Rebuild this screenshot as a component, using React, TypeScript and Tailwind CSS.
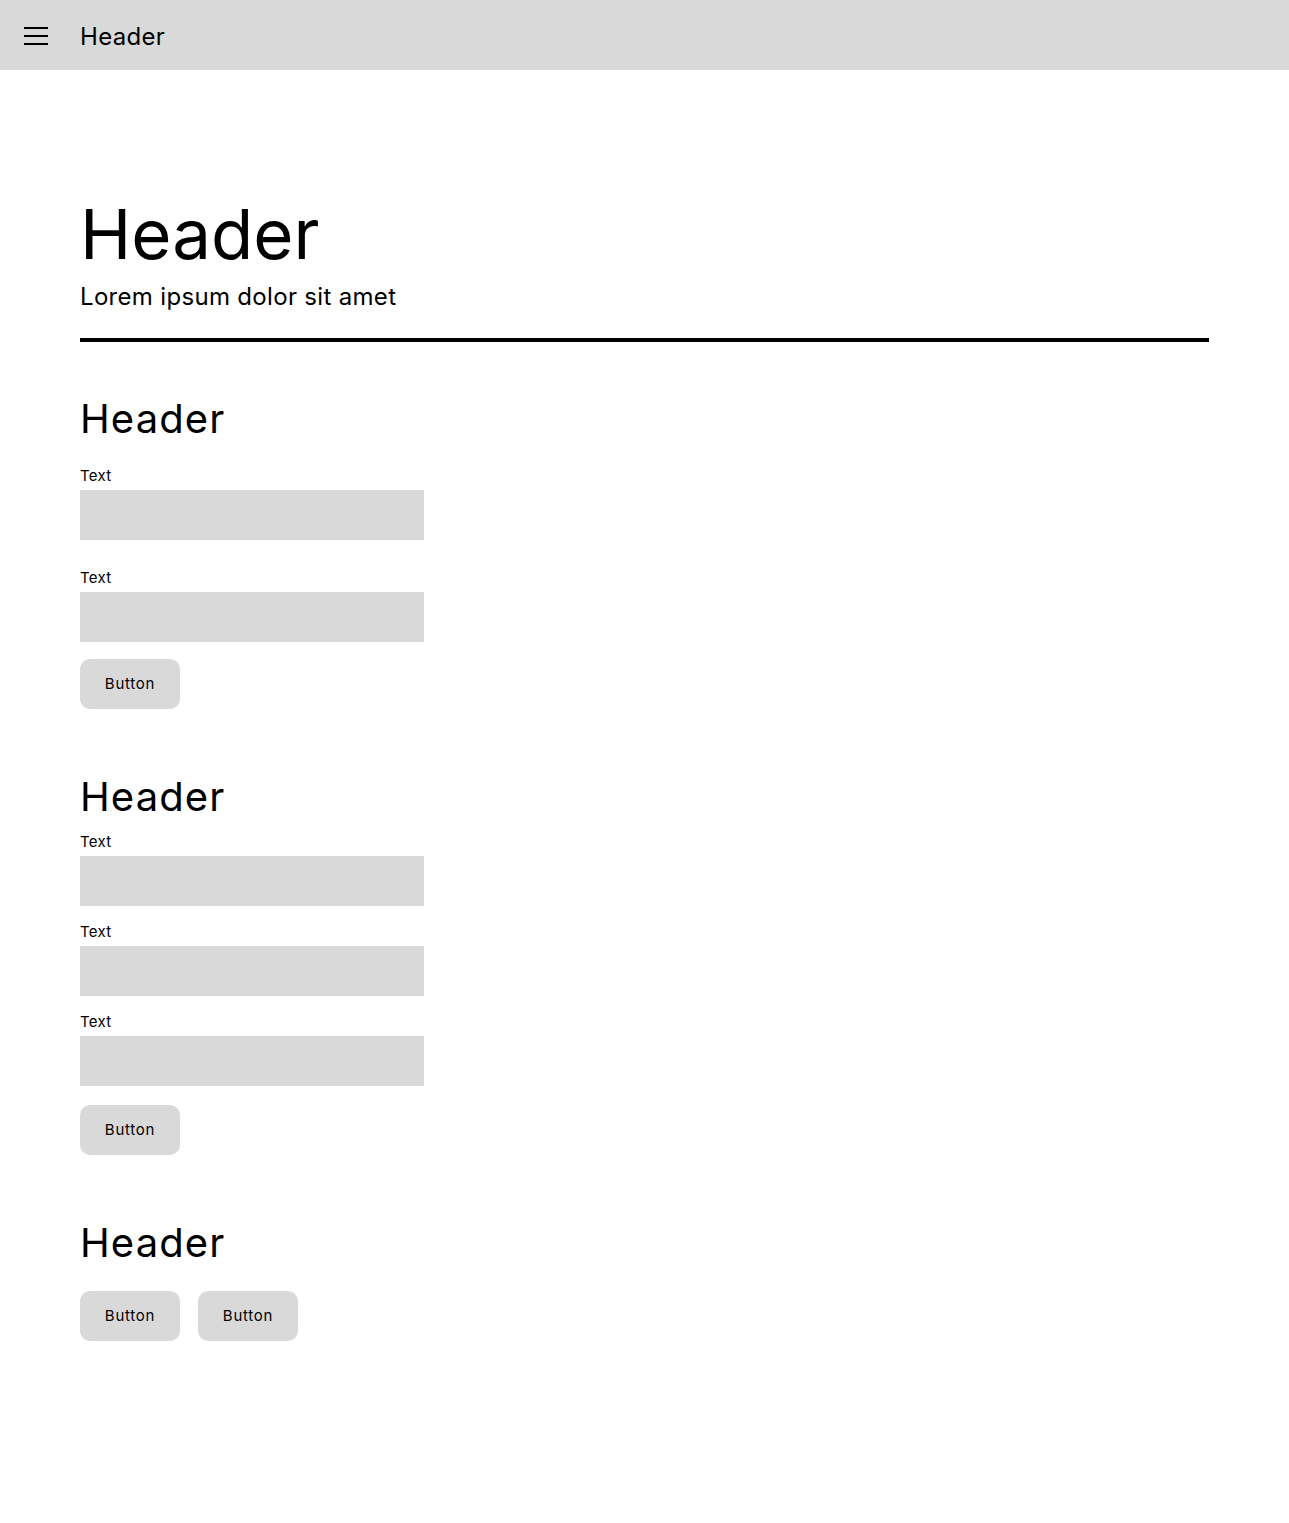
import React from "react";

const lex = { fontFamily: "Inter, 'Noto Sans', sans-serif" };

function Field() {
  return (
    <div className="flex flex-col">
      <div className="pt-[1px] text-[15px] leading-[19px] text-black">Text</div>
      <div className="mt-[5px] h-[50px] w-[344px] bg-[#d9d9d9]" />
    </div>
  );
}

function Btn() {
  return (
    <button className="h-[50px] w-[100px] rounded-[10px] bg-[#d9d9d9] text-[15px] tracking-[0.05em] text-black">
      Button
    </button>
  );
}

export default function App() {
  return (
    <div className="min-h-[1523px] bg-white text-black tracking-[0.02em]" style={lex}>
      <header className="flex h-[70px] items-center bg-[#d9d9d9] px-[24px] pt-[2px]">
        <svg width="24" height="24" viewBox="0 0 24 24" className="shrink-0">
          <path d="M0 4h24M0 12h24M0 20h24" stroke="black" strokeWidth="2" />
        </svg>
        <span className="ml-[32px] pt-[2px] text-[24px] leading-none">Header</span>
      </header>
      <main className="px-[80px]">
        <div className="pt-[124px]">
          <h1 className="text-[69px] leading-[80px] tracking-normal">Header</h1>
          <p className="mt-[8px] text-[24px] leading-[30px]">Lorem ipsum dolor sit amet</p>
          <div className="mt-[26px] h-[4px] bg-black" />
        </div>

        <section className="mt-[53px] flex flex-col">
          <h2 className="text-[40px] leading-[48px] tracking-[0.028em]">Header</h2>
          <div className="mt-[22px] flex flex-col gap-[27px]">
            <Field />
            <Field />
          </div>
          <div className="mt-[17px]">
            <Btn />
          </div>
        </section>

        <section className="mt-[64px] flex flex-col">
          <h2 className="text-[40px] leading-[48px] tracking-[0.028em]">Header</h2>
          <div className="mt-[10px] flex flex-col gap-[15px]">
            <Field />
            <Field />
            <Field />
          </div>
          <div className="mt-[19px]">
            <Btn />
          </div>
        </section>

        <section className="mt-[64px] flex flex-col">
          <h2 className="text-[40px] leading-[48px] tracking-[0.028em]">Header</h2>
          <div className="mt-[24px] flex gap-[18px]">
            <Btn />
            <Btn />
          </div>
        </section>
      </main>
    </div>
  );
}
